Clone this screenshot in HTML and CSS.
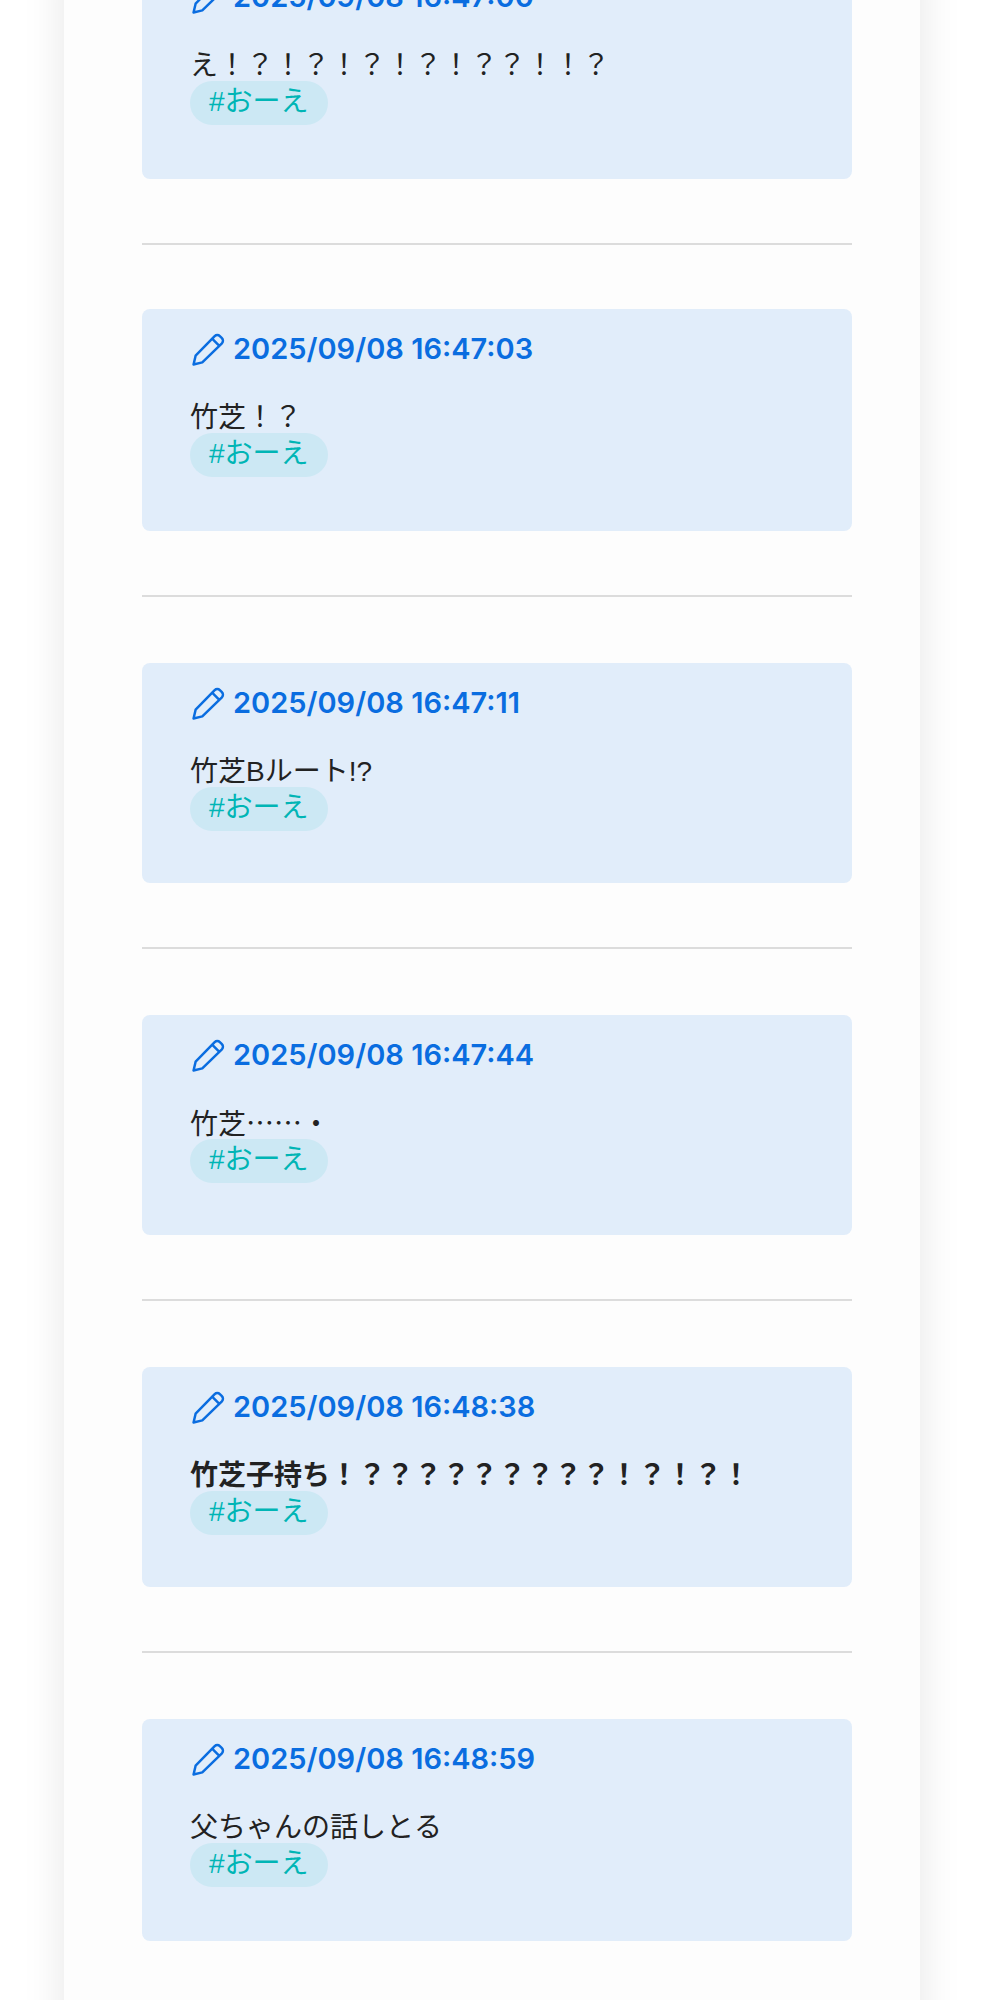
FILE: index.html
```html
<!DOCTYPE html>
<html lang="ja">
<head>
<meta charset="utf-8">
<title>ログ</title>
<link rel="stylesheet" href="styles.css">
</head>
<body>
<main class="page">
  <article class="entry entry-tall">
    <h2 class="stamp"><svg class="pen" viewBox="0 0 32 32"><path d="M1.500 30.500l2-8.500L22 3a3.600 3.600 0 0 1 5 0l2 2a3.600 3.600 0 0 1 0 5L10 28.500zM19.500 5.500l7 7"/></svg>2025/09/08 16:47:00</h2>
    <p class="msg">え！？！？！？！？！？？！！？</p>
    <span class="tag">#おーえ</span>
  </article>
  <hr class="rule rule-first">
  <article class="entry entry-tall">
    <h2 class="stamp"><svg class="pen" viewBox="0 0 32 32"><path d="M1.500 30.500l2-8.500L22 3a3.600 3.600 0 0 1 5 0l2 2a3.600 3.600 0 0 1 0 5L10 28.500zM19.500 5.500l7 7"/></svg>2025/09/08 16:47:03</h2>
    <p class="msg">竹芝！？</p>
    <span class="tag">#おーえ</span>
  </article>
  <hr class="rule">
  <article class="entry">
    <h2 class="stamp"><svg class="pen" viewBox="0 0 32 32"><path d="M1.500 30.500l2-8.500L22 3a3.600 3.600 0 0 1 5 0l2 2a3.600 3.600 0 0 1 0 5L10 28.500zM19.500 5.500l7 7"/></svg>2025/09/08 16:47:11</h2>
    <p class="msg">竹芝Bルート!?</p>
    <span class="tag">#おーえ</span>
  </article>
  <hr class="rule">
  <article class="entry">
    <h2 class="stamp"><svg class="pen" viewBox="0 0 32 32"><path d="M1.500 30.500l2-8.500L22 3a3.600 3.600 0 0 1 5 0l2 2a3.600 3.600 0 0 1 0 5L10 28.500zM19.500 5.500l7 7"/></svg>2025/09/08 16:47:44</h2>
    <p class="msg msg-cjk">竹芝……・</p>
    <span class="tag">#おーえ</span>
  </article>
  <hr class="rule">
  <article class="entry">
    <h2 class="stamp"><svg class="pen" viewBox="0 0 32 32"><path d="M1.500 30.500l2-8.500L22 3a3.600 3.600 0 0 1 5 0l2 2a3.600 3.600 0 0 1 0 5L10 28.500zM19.500 5.500l7 7"/></svg>2025/09/08 16:48:38</h2>
    <p class="msg"><strong>竹芝子持ち！？？？？？？？？？！？！？！</strong></p>
    <span class="tag">#おーえ</span>
  </article>
  <hr class="rule">
  <article class="entry entry-tall">
    <h2 class="stamp"><svg class="pen" viewBox="0 0 32 32"><path d="M1.500 30.500l2-8.500L22 3a3.600 3.600 0 0 1 5 0l2 2a3.600 3.600 0 0 1 0 5L10 28.500zM19.500 5.500l7 7"/></svg>2025/09/08 16:48:59</h2>
    <p class="msg">父ちゃんの話しとる</p>
    <span class="tag">#おーえ</span>
  </article>
</main>
</body>
</html>
```
FILE: styles.css
```css
html, body {
  margin: 0;
  padding: 0;
  background: #fff;
  height: 2000px;
  overflow: hidden;
}
.page {
  box-sizing: border-box;
  width: 856px;
  margin: -43px 0 0 64px;
  padding: 0 68px 0 78px;
  height: 2100px;
  background: #fdfdfd;
  box-shadow: 0 0 40px rgba(0, 0, 0, 0.1);
  font-family: "Liberation Sans", "Noto Sans CJK JP", sans-serif;
  color: #222;
}
.entry {
  box-sizing: border-box;
  height: 220px;
  padding: 23px 48px;
  background: #e1edfa;
  border-radius: 8px;
}
.entry-tall {
  height: 222px;
}
.stamp {
  display: flex;
  align-items: center;
  gap: 8px;
  margin: 0 0 0 2px;
  height: 34px;
  font-size: 29px;
  line-height: 34px;
  font-weight: 600;
  color: #0a6de0;
  font-family: "Inter", "Noto Sans CJK JP", sans-serif;
}
.pen {
  width: 33px;
  height: 33px;
  flex: none;
  fill: none;
  stroke: #0a6de0;
  stroke-width: 2.4;
  stroke-linejoin: round;
  stroke-linecap: round;
}
.msg {
  margin: 37px 0 0;
  font-size: 28px;
  line-height: 30px;
}
.msg-cjk {
  margin-top: 33px;
  line-height: 34px;
  font-family: "Noto Sans CJK JP", sans-serif;
}
.tag {
  display: block;
  width: fit-content;
  height: 44px;
  padding: 0 19px;
  line-height: 42px;
  font-size: 28px;
  border-radius: 22px;
  background: #cce8f4;
  color: #00b5b5;
}
.rule {
  margin: 64px 0 66px;
  height: 2px;
  border: 0;
  background: #dcdcdc;
}
.rule-first {
  margin: 64px 0;
}
```
